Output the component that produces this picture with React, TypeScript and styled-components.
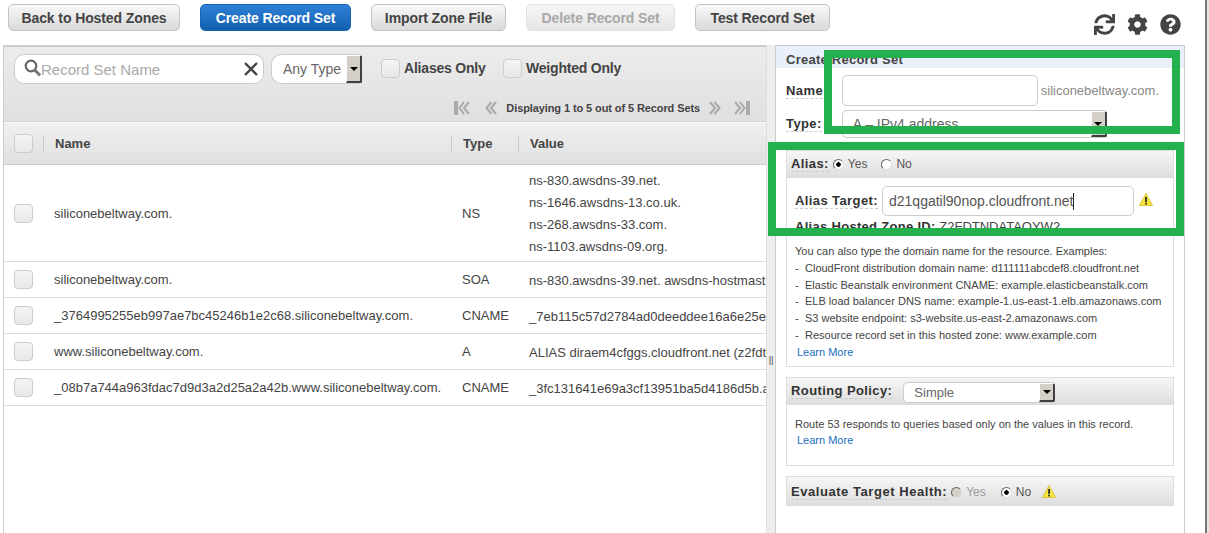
import styled, { createGlobalStyle } from "styled-components";
import { FaSync, FaCog, FaQuestionCircle } from "react-icons/fa";

const GlobalStyle = createGlobalStyle`
    html, body {
        margin: 0;
        padding: 0;
        height: 100%;
        overflow: hidden;
        background: #fff;
        font-family: "Liberation Sans", Arial, sans-serif;
        color: #444;
    }
    #root {
        height: 100%;
    }
`;

const Page = styled.div`
    position: relative;
    width: 1209px;
    height: 533px;
    display: flex;
    overflow: hidden;
`;

const Content = styled.div`
    width: 1205px;
    display: flex;
    flex-direction: column;
`;

const PageEdge = styled.div`
    width: 4px;
    border-left: 2px solid #777;
    background: #e6e6e6;
    box-sizing: border-box;
`;

const Toolbar = styled.div`
    height: 45px;
    flex: none;
    display: flex;
    align-items: flex-start;
    padding: 4px 0 0 8px;
    box-sizing: border-box;
    gap: 20px;
`;

const Button = styled.div<{ $width: number; $variant?: "primary" | "disabled" }>`
    width: ${(p) => p.$width}px;
    height: 27px;
    box-sizing: border-box;
    display: flex;
    align-items: center;
    justify-content: center;
    border-radius: 5px;
    font-size: 14px;
    font-weight: bold;
    letter-spacing: -0.1px;
    border: 1px solid ${(p) => (p.$variant === "primary" ? "#1a66b5" : p.$variant === "disabled" ? "#e2e2e2" : "#c4c4c4")};
    color: ${(p) => (p.$variant === "primary" ? "#fff" : p.$variant === "disabled" ? "#a8a8a8" : "#444")};
    background: ${(p) =>
        p.$variant === "primary"
            ? "linear-gradient(#2f80d8, #1160ae)"
            : p.$variant === "disabled"
            ? "linear-gradient(#f6f6f6, #e6e6e6)"
            : "linear-gradient(#f8f8f8, #dadada)"};
`;

const ToolIcons = styled.div`
    margin-left: auto;
    margin-right: 24px;
    margin-top: 10px;
    display: flex;
    gap: 12px;
    font-size: 21px;
    color: #444;
    svg {
        display: block;
    }
`;

const Main = styled.div`
    flex: 1;
    display: flex;
    padding-left: 3px;
    min-height: 0;
`;

const LeftPanel = styled.div`
    width: 764px;
    flex: none;
    box-sizing: border-box;
    border-left: 1px solid #ccc;
    border-right: 1px solid #ddd;
    border-top: 2px solid #ccc;
    overflow: hidden;
`;

const FilterArea = styled.div`
    height: 75px;
    box-sizing: border-box;
    background: linear-gradient(#ececec, #e0e0e0);
    border-bottom: 1px solid #d4d4d4;
    padding-top: 7px;
`;

const FilterRow = styled.div`
    display: flex;
    align-items: center;
    padding-left: 10px;
    height: 30px;
`;

const SearchBox = styled.div`
    width: 250px;
    height: 30px;
    box-sizing: border-box;
    background: #fff;
    border: 1px solid #ccc;
    border-radius: 10px;
    display: flex;
    align-items: center;
    padding: 0 4px 0 9px;
`;

const SearchInput = styled.input`
    flex: 1;
    min-width: 0;
    border: none;
    outline: none;
    padding: 0;
    font-family: inherit;
    font-size: 15px;
    background: transparent;
    &::placeholder {
        color: #aaa;
        opacity: 1;
    }
`;

const Select = styled.div<{ $width: number; $height: number; $pad: number; $radius?: number; $font?: number }>`
    width: ${(p) => p.$width}px;
    height: ${(p) => p.$height}px;
    box-sizing: border-box;
    flex: none;
    background: #fff;
    border: 1px solid #ccc;
    border-right: none;
    border-radius: ${(p) => p.$radius ?? 10}px 3px 3px ${(p) => p.$radius ?? 10}px;
    display: flex;
    align-items: center;
    justify-content: space-between;
    padding-left: ${(p) => p.$pad}px;
    font-size: ${(p) => p.$font ?? 14}px;
    color: #666;
    overflow: hidden;
`;

const TypeFilter = styled(Select)`
    margin-left: 7px;
`;

const RoutingSelect = styled(Select)`
    margin-top: 3px;
`;

const SelectArrow = styled.span`
    width: 16px;
    align-self: stretch;
    flex: none;
    box-sizing: border-box;
    background: #d4d0c8;
    border-top: 1px solid #fff;
    border-left: 1px solid #fff;
    border-right: 2px solid #404040;
    border-bottom: 2px solid #404040;
    display: flex;
    align-items: center;
    justify-content: center;
    &::after {
        content: "";
        border-left: 4px solid transparent;
        border-right: 4px solid transparent;
        border-top: 4px solid #000;
    }
`;

const Check = styled.span`
    width: 19px;
    height: 19px;
    flex: none;
    display: block;
    box-sizing: border-box;
    border: 1px solid #ccc;
    border-radius: 4px;
    background: linear-gradient(#f5f5f5, #e8e8e8);
`;

const FilterOption = styled.label<{ $width: number; $left?: number }>`
    width: ${(p) => p.$width}px;
    margin-left: ${(p) => p.$left ?? 0}px;
    margin-bottom: 2px;
    display: flex;
    align-items: center;
    gap: 4px;
    flex: none;
    font-size: 14px;
    font-weight: bold;
    letter-spacing: -0.2px;
    white-space: nowrap;
    color: #444;
`;

const Pager = styled.div`
    display: flex;
    align-items: center;
    justify-content: flex-end;
    height: 24px;
    margin-top: 12px;
    padding-right: 16px;
    color: #444;
    font-size: 11px;
    font-weight: bold;
    letter-spacing: -0.1px;
    svg {
        display: block;
    }
`;

const PagerText = styled.span`
    margin: 0 9px;
    white-space: nowrap;
`;

const PagerGap = styled.span<{ $width: number }>`
    width: ${(p) => p.$width}px;
`;

const Columns = "40px 408px 67px minmax(0, 1fr)";

const HeadRow = styled.div`
    display: grid;
    grid-template-columns: ${Columns};
    height: 43px;
    box-sizing: border-box;
    align-items: center;
    background: linear-gradient(#f0f0f0, #e0e0e0);
    border-top: 1px solid #f8f8f8;
    border-bottom: 1px solid #ccc;
`;

const HeadCell = styled.div`
    height: 18px;
    display: flex;
    align-items: center;
    margin-left: -1px;
    padding-left: 11px;
    font-size: 13px;
    font-weight: bold;
    color: #444;
    border-left: 1px solid #ccc;
`;

const Row = styled.div`
    display: grid;
    grid-template-columns: ${Columns};
    align-items: center;
    box-sizing: border-box;
    min-height: 36px;
    border-bottom: 1px solid #ddd;
    font-size: 13px;
    color: #444;
`;

const CheckCell = styled.div`
    padding-left: 10px;
`;

const Cell = styled.div`
    padding-left: 10px;
    white-space: nowrap;
`;

const ValueLine = styled.div`
    line-height: 22px;
    white-space: nowrap;
`;

const ValueStack = styled.div`
    padding: 5px 0 3px 10px;
    overflow: hidden;
`;

const Resizer = styled.div`
    width: 8px;
    flex: none;
    background: #eee;
    display: flex;
    align-items: center;
    justify-content: center;
    font-size: 9px;
    color: #444;
    span {
        margin-top: 141px;
    }
`;

const RightPanel = styled.div`
    width: 410px;
    flex: none;
    box-sizing: border-box;
    border: 1px solid #ccc;
    border-bottom: none;
    overflow: hidden;
`;

const PanelTitle = styled.div`
    height: 22px;
    background: #e9f0fb;
    padding: 6px 0 0 10px;
    box-sizing: border-box;
    font-size: 13px;
    font-weight: bold;
    letter-spacing: 0.25px;
    color: #444;
`;

const FormRows = styled.div`
    display: flex;
    flex-direction: column;
    gap: 4px;
    padding: 7px 0 0 10px;
`;

const FormRow = styled.div`
    display: flex;
    align-items: center;
`;

const FieldLabel = styled.span<{ $after?: number; $spacing?: number }>`
    font-size: 13px;
    font-weight: bold;
    letter-spacing: ${(p) => p.$spacing ?? 0.4}px;
    color: #333;
    white-space: nowrap;
    border-bottom: 1px dashed #ccc;
    line-height: 15px;
    flex: none;
    margin-right: ${(p) => p.$after ?? 0}px;
`;

const TextBox = styled.div<{ $width: number; $height: number }>`
    width: ${(p) => p.$width}px;
    height: ${(p) => p.$height}px;
    box-sizing: border-box;
    flex: none;
    border: 1px solid #ccc;
    border-radius: 5px;
    background: #fff;
    display: flex;
    align-items: center;
    padding-left: 6px;
    font-size: 14px;
    color: #555;
`;

const Caret = styled.span`
    width: 1px;
    height: 17px;
    background: #222;
`;

const Suffix = styled.span`
    margin-left: 3px;
    font-size: 13px;
    color: #888;
    white-space: nowrap;
`;

const Section = styled.section<{ $top: number }>`
    margin: ${(p) => p.$top}px 10px 0;
    width: 388px;
    box-sizing: border-box;
`;

const SectionHead = styled.div<{ $height: number }>`
    height: ${(p) => p.$height}px;
    box-sizing: border-box;
    display: flex;
    align-items: center;
    padding-left: 4px;
    border: 1px solid #ddd;
    background: linear-gradient(#f6f6f6, #dedede);
`;

const EvaluateHead = styled(SectionHead)`
    padding-top: 2px;
`;

const SectionBody = styled.div<{ $bottom: number }>`
    box-sizing: border-box;
    border: 1px solid #ddd;
    border-top: none;
    font-size: 11px;
    line-height: 16.8px;
    color: #444;
    padding: 0 8px ${(p) => p.$bottom}px;
`;

const RadioWrap = styled.span<{ $gap: number; $muted?: boolean }>`
    display: inline-flex;
    align-items: center;
    margin-left: ${(p) => p.$gap}px;
    font-size: 12px;
    color: ${(p) => (p.$muted ? "#999" : "#555")};
`;

const Radio = styled.span<{ $on?: boolean; $muted?: boolean }>`
    width: 11px;
    height: 11px;
    box-sizing: border-box;
    border-radius: 50%;
    border: 1px solid #666;
    border-right-color: #ddd;
    border-bottom-color: #ddd;
    margin-right: 4px;
    background: ${(p) =>
        p.$on ? "radial-gradient(circle, #000 0 2px, #fff 2.5px)" : p.$muted ? "#d4d0c8" : "#fff"};
`;

const AliasRow = styled.div`
    display: flex;
    align-items: center;
    padding-top: 8px;
`;

const ZoneLine = styled.div`
    margin-top: 3px;
    height: 16px;
    font-size: 13px;
    line-height: 16px;
    white-space: nowrap;
`;

const ZoneLabel = styled.b`
    letter-spacing: 0.3px;
    color: #333;
`;

const HelpText = styled.div`
    margin-top: 8px;
`;

const HelpItem = styled.div`
    white-space: nowrap;
    span {
        display: inline-block;
        width: 10px;
    }
`;

const LearnMore = styled.a`
    display: block;
    margin-left: 2px;
    color: #1a6fc4;
    text-decoration: none;
`;

const RoutingText = styled.div`
    padding-top: 11px;
`;

const Warning = styled.svg<{ $gap: number; $lift?: number }>`
    width: 14px;
    height: 13px;
    flex: none;
    margin-left: ${(p) => p.$gap}px;
    margin-bottom: ${(p) => p.$lift ?? 0}px;
`;

// the two green highlight boxes someone drew on top of the screenshot
const Highlight = styled.div<{ $x: number; $y: number; $w: number; $h: number }>`
    position: absolute;
    left: ${(p) => p.$x}px;
    top: ${(p) => p.$y}px;
    width: ${(p) => p.$w}px;
    height: ${(p) => p.$h}px;
    box-sizing: border-box;
    border: 8px solid #22b14c;
    pointer-events: none;
`;

const records = [
    { name: "siliconebeltway.com.", type: "NS", value: ["ns-830.awsdns-39.net.", "ns-1646.awsdns-13.co.uk.", "ns-268.awsdns-33.com.", "ns-1103.awsdns-09.org."] },
    { name: "siliconebeltway.com.", type: "SOA", value: ["ns-830.awsdns-39.net. awsdns-hostmast"] },
    { name: "_3764995255eb997ae7bc45246b1e2c68.siliconebeltway.com.", type: "CNAME", value: ["_7eb115c57d2784ad0deeddee16a6e25e"] },
    { name: "www.siliconebeltway.com.", type: "A", value: ["ALIAS diraem4cfggs.cloudfront.net (z2fdt"] },
    { name: "_08b7a744a963fdac7d9d3a2d25a2a42b.www.siliconebeltway.com.", type: "CNAME", value: ["_3fc131641e69a3cf13951ba5d4186d5b.a"] },
];

const helpLines = [
    "CloudFront distribution domain name: d111111abcdef8.cloudfront.net",
    "Elastic Beanstalk environment CNAME: example.elasticbeanstalk.com",
    "ELB load balancer DNS name: example-1.us-east-1.elb.amazonaws.com",
    "S3 website endpoint: s3-website.us-east-2.amazonaws.com",
    "Resource record set in this hosted zone: www.example.com",
];

function WarnIcon({ gap, lift }: { gap: number; lift?: number }) {
    return (
        <Warning $gap={gap} $lift={lift} viewBox="0 0 14 13">
            <path d="M7 .5 13.6 12.5H.4Z" fill="#f7e43c" stroke="#d8c640" strokeLinejoin="round" />
            <rect x="6.2" y="4" width="1.7" height="5" fill="#222" />
            <rect x="6.2" y="9.8" width="1.7" height="1.6" fill="#222" />
        </Warning>
    );
}

function Chevrons({ flip }: { flip?: boolean }) {
    return (
        <svg width="12" height="14" viewBox="0 0 12 14" style={{ transform: flip ? "scaleX(-1)" : undefined }}>
            <path d="M6.5 1 1.5 7l5 6M11 1 6 7l5 6" fill="none" stroke="#aaa" strokeWidth="2" />
        </svg>
    );
}

function EndChevrons({ flip }: { flip?: boolean }) {
    return (
        <svg width="16" height="14" viewBox="0 0 16 14" style={{ transform: flip ? "scaleX(-1)" : undefined }}>
            <rect x="0" y="0" width="4" height="14" fill="#aaa" />
            <path d="M10 1 5.5 7l4.5 6M15 1 10 7l5 6" fill="none" stroke="#aaa" strokeWidth="2" />
        </svg>
    );
}

export default function App() {
    return (
        <Page>
            <GlobalStyle />
            <Content>
                <Toolbar>
                    <Button $width={172}>Back to Hosted Zones</Button>
                    <Button $width={151} $variant="primary">Create Record Set</Button>
                    <Button $width={135}>Import Zone File</Button>
                    <Button $width={149} $variant="disabled">Delete Record Set</Button>
                    <Button $width={135}>Test Record Set</Button>
                    <ToolIcons>
                        <FaSync />
                        <FaCog />
                        <FaQuestionCircle />
                    </ToolIcons>
                </Toolbar>
                <Main>
                    <LeftPanel>
                        <FilterArea>
                            <FilterRow>
                                <SearchBox>
                                    <svg width="17" height="20" viewBox="0 0 17 20" style={{ flex: "none" }}>
                                        <circle cx="7" cy="7" r="5.3" fill="none" stroke="#666" strokeWidth="2.2" />
                                        <path d="M10.8 11 16 16.5" stroke="#777" strokeWidth="3" />
                                    </svg>
                                    <SearchInput placeholder="Record Set Name" readOnly />
                                    <svg width="16" height="16" viewBox="0 0 16 16" style={{ flex: "none" }}>
                                        <path d="M2 2 14 14M14 2 2 14" stroke="#444" strokeWidth="2.4" />
                                    </svg>
                                </SearchBox>
                                <TypeFilter $width={91} $height={30} $pad={11}>
                                    Any Type
                                    <SelectArrow />
                                </TypeFilter>
                                <FilterOption $width={122} $left={19}><Check />Aliases Only</FilterOption>
                                <FilterOption $width={130}><Check />Weighted Only</FilterOption>
                            </FilterRow>
                            <Pager>
                                <EndChevrons />
                                <PagerGap $width={15} />
                                <Chevrons />
                                <PagerText>Displaying 1 to 5 out of 5 Record Sets</PagerText>
                                <Chevrons flip />
                                <PagerGap $width={13} />
                                <EndChevrons flip />
                            </Pager>
                        </FilterArea>
                        <HeadRow>
                            <CheckCell><Check /></CheckCell>
                            <HeadCell>Name</HeadCell>
                            <HeadCell>Type</HeadCell>
                            <HeadCell>Value</HeadCell>
                        </HeadRow>
                        {records.map((r, i) => (
                            <Row key={i}>
                                <CheckCell><Check /></CheckCell>
                                <Cell>{r.name}</Cell>
                                <Cell>{r.type}</Cell>
                                <ValueStack>
                                    {r.value.map((v) => (
                                        <ValueLine key={v}>{v}</ValueLine>
                                    ))}
                                </ValueStack>
                            </Row>
                        ))}
                    </LeftPanel>
                    <Resizer><span>||</span></Resizer>
                    <RightPanel>
                        <PanelTitle>Create Record Set</PanelTitle>
                        <FormRows>
                            <FormRow>
                                <FieldLabel $after={14}>Name:</FieldLabel>
                                <TextBox $width={196} $height={31} />
                                <Suffix>siliconebeltway.com.</Suffix>
                            </FormRow>
                            <FormRow>
                                <FieldLabel $after={20}>Type:</FieldLabel>
                                <Select $width={265} $height={28} $pad={10} $radius={5}>
                                    A – IPv4 address
                                    <SelectArrow />
                                </Select>
                            </FormRow>
                        </FormRows>
                        <Section $top={12}>
                            <SectionHead $height={28}>
                                <FieldLabel>Alias:</FieldLabel>
                                <RadioWrap $gap={4}><Radio $on />Yes</RadioWrap>
                                <RadioWrap $gap={14}><Radio />No</RadioWrap>
                            </SectionHead>
                            <SectionBody $bottom={5}>
                                <AliasRow>
                                    <FieldLabel $after={4}>Alias Target:</FieldLabel>
                                    <TextBox $width={252} $height={30}>
                                        d21qgatil90nop.cloudfront.net<Caret />
                                    </TextBox>
                                    <WarnIcon gap={5} lift={3} />
                                </AliasRow>
                                <ZoneLine><ZoneLabel>Alias Hosted Zone ID:</ZoneLabel> Z2FDTNDATAQYW2</ZoneLine>
                                <HelpText>
                                    You can also type the domain name for the resource. Examples:
                                    {helpLines.map((line) => (
                                        <HelpItem key={line}><span>-</span>{line}</HelpItem>
                                    ))}
                                </HelpText>
                                <LearnMore>Learn More</LearnMore>
                            </SectionBody>
                        </Section>
                        <Section $top={10}>
                            <SectionHead $height={28}>
                                <FieldLabel $after={11}>Routing Policy:</FieldLabel>
                                <RoutingSelect $width={152} $height={21} $pad={10} $radius={5} $font={13}>
                                    Simple
                                    <SelectArrow />
                                </RoutingSelect>
                            </SectionHead>
                            <SectionBody $bottom={16}>
                                <RoutingText>Route 53 responds to queries based only on the values in this record.</RoutingText>
                                <LearnMore>Learn More</LearnMore>
                            </SectionBody>
                        </Section>
                        <Section $top={10}>
                            <EvaluateHead $height={30}>
                                <FieldLabel $spacing={0.55}>Evaluate Target Health:</FieldLabel>
                                <RadioWrap $gap={4} $muted><Radio $muted />Yes</RadioWrap>
                                <RadioWrap $gap={15}><Radio $on />No</RadioWrap>
                                <WarnIcon gap={11} lift={2} />
                            </EvaluateHead>
                        </Section>
                    </RightPanel>
                </Main>
            </Content>
            <PageEdge />
            <Highlight $x={824} $y={50} $w={356} $h={84} />
            <Highlight $x={768} $y={142} $w={416} $h={94} />
        </Page>
    );
}
